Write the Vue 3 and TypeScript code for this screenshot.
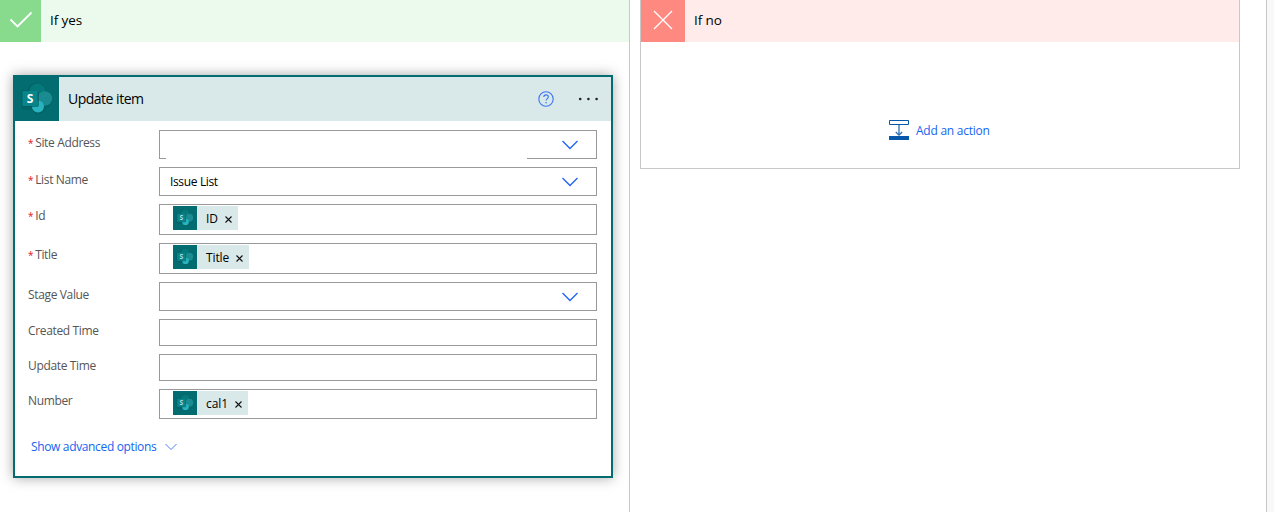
<template>
  <svg class="symbols" width="0" height="0">
    <symbol id="sharepoint" viewBox="0 0 44 44">
      <path
        d="M22 5.5a9 9 0 0 1 9 8.500a9 9 0 0 1 0 17a7.500 7.500 0 0 1-14 2h-7a4 4 0 0 1-4-4v-13a3 3 0 0 1 3-3h4a9 9 0 0 1 9-7.500z"
        fill="#025a5e"
        opacity="0.45"
      />
      <circle cx="22.5" cy="14.500" r="8" fill="#05787b" />
      <circle cx="29.800" cy="21.500" r="7.300" fill="#1a8b91" />
      <circle cx="23" cy="29.500" r="6" fill="#28b3be" />
      <path d="M11 15h13v13a2 2 0 0 1-2 2h-11z" fill="#02595d" opacity="0.65" />
      <rect x="7.500" y="14" width="15" height="15" rx="1" fill="#07858a" />
    </symbol>
  </svg>
  <div class="designer">
    <section class="branch yes">
      <header class="branchHeader">
        <div class="branchIcon">
          <svg width="24" height="18" viewBox="0 0 24 18">
            <path d="M1.500 8.500 8.500 15.500 22.500 1.500" fill="none" stroke="#fff" stroke-width="1.8" />
          </svg>
        </div>
        <span>If yes</span>
      </header>
      <div class="card">
        <div class="cardHeader">
          <svg class="cardIcon" viewBox="0 0 44 44">
            <use href="#sharepoint" />
            <text x="15" y="26" text-anchor="middle" class="spLetter">S</text>
          </svg>
          <span class="cardTitle">Update item</span>
          <svg class="help" width="16" height="16" viewBox="0 0 16 16">
            <circle cx="8" cy="8" r="7.2" fill="none" stroke="#3b74f5" stroke-width="1.1" />
            <path
              d="M5.8 6.1c0-1.4 1-2.2 2.3-2.2s2.2.8 2.2 2c0 1.6-2.2 1.800-2.2 3.700"
              fill="none"
              stroke="#3b74f5"
              stroke-width="1.1"
            />
            <rect x="7.4" y="11" width="1.3" height="1.3" fill="#3b74f5" />
          </svg>
          <svg class="dots" width="21" height="4" viewBox="0 0 21 4">
            <circle cx="2.2" cy="2" r="1.3" />
            <circle cx="10.4" cy="2" r="1.3" />
            <circle cx="18.6" cy="2" r="1.3" />
          </svg>
        </div>
        <div class="fields">
          <div v-for="field in fields" :key="field.label" class="field">
            <label :class="field.kind + 'Label'"><i v-if="field.required">*</i>{{ field.label }}</label>
            <div class="box" :class="[field.kind, { cleared: field.cleared }]">
              <span v-if="field.value" class="value">{{ field.value }}</span>
              <div v-if="field.token" class="token">
                <svg class="tokenIcon" viewBox="0 0 44 44">
                  <use href="#sharepoint" />
                  <text x="15" y="26" text-anchor="middle" class="spLetter faded">S</text>
                </svg>
                <span>{{ field.token }}</span>
                <svg class="remove" width="7" height="7" viewBox="0 0 7 7">
                  <path d="M.5.5l6 6M6.5.5l-6 6" stroke="#111" stroke-width="1.1" />
                </svg>
              </div>
              <svg v-if="field.kind === 'select'" class="chevron" width="16" height="10" viewBox="0 0 16 10">
                <path d="M.5 1 8 8.500 15.500 1" fill="none" stroke="#2266f5" stroke-width="1.4" />
              </svg>
            </div>
          </div>
        </div>
        <a class="advanced">
          <span>Show advanced options</span>
          <svg width="12" height="8" viewBox="0 0 12 8">
            <path d="M.5 1 6 6.500 11.500 1" fill="none" stroke="#4a7ef5" stroke-width="1" />
          </svg>
        </a>
      </div>
    </section>
    <section class="branch no">
      <header class="branchHeader">
        <div class="branchIcon">
          <svg width="20" height="20" viewBox="0 0 20 20">
            <path d="M1 1l18 18M19 1L1 19" stroke="#fff" stroke-width="1.3" />
          </svg>
        </div>
        <span>If no</span>
      </header>
      <a class="addAction">
        <svg width="20" height="20" viewBox="0 0 20 20">
          <path d="M.5.5h19v4H.5z" fill="#fff" stroke="#0757ab" />
          <path d="M10 5v10M6.800 12 10 15.200 13.200 12" fill="none" stroke="#2f6fb5" stroke-width="1.3" />
          <path d="M0 16h20v4H0z" fill="#0757ab" />
        </svg>
        <span>Add an action</span>
      </a>
    </section>
    <div class="rail"></div>
  </div>
</template>

<script setup lang="ts">
interface Field {
  label: string;
  kind: 'select' | 'tokens' | 'number' | 'text';
  required?: boolean;
  value?: string;
  token?: string;
  cleared?: boolean;
}

const fields: Field[] = [
  { label: 'Site Address', kind: 'select', required: true, cleared: true },
  { label: 'List Name', kind: 'select', required: true, value: 'Issue List' },
  { label: 'Id', kind: 'tokens', required: true, token: 'ID' },
  { label: 'Title', kind: 'tokens', required: true, token: 'Title' },
  { label: 'Stage Value', kind: 'select' },
  { label: 'Created Time', kind: 'text' },
  { label: 'Update Time', kind: 'text' },
  { label: 'Number', kind: 'number', token: 'cal1' }
];
</script>

<style>
body {
  overflow: hidden;
  background: #fff;
}
</style>

<style scoped>
.symbols {
  position: absolute;
}
.spLetter {
  font: 700 12px 'Open Sans', sans-serif;
  letter-spacing: 0;
  fill: #fff;
}
.faded {
  fill: #b5dadb;
}
.designer {
  display: flex;
  height: 512px;
  font-family: 'Segoe UI', 'Open Sans', 'Noto Sans', sans-serif;
  font-size: 12px;
  letter-spacing: -0.35px;
  color: #000;
}
.designer svg {
  display: block;
  flex: none;
}
.branch {
  box-sizing: border-box;
  flex: none;
}
.yes {
  width: 630px;
  border-right: 1px solid #c8c8c8;
}
.no {
  width: 600px;
  height: 169px;
  margin-left: 10px;
  border: 1px solid #c8c8c8;
  border-top: none;
}
.branchHeader {
  display: flex;
  align-items: center;
  height: 42px;
  font-size: 13.5px;
}
.branchHeader span {
  margin: -2px 0 0 9px;
  letter-spacing: -0.1px;
}
.branchIcon {
  display: flex;
  align-items: center;
  justify-content: center;
  height: 42px;
}
.yes .branchHeader {
  background: #ebfaed;
}
.yes .branchIcon {
  width: 41px;
  background: #88da8d;
}
.no .branchHeader {
  background: #ffebe9;
}
.no .branchIcon {
  width: 44px;
  background: #fe8981;
}
.branchIcon svg {
  margin-top: -3px;
}
.card {
  box-sizing: border-box;
  width: 600px;
  height: 403px;
  margin: 33px 0 0 13px;
  border: 2px solid #036c70;
  background: #fff;
  box-shadow: 0 0 12px rgba(0, 0, 0, 0.35);
}
.cardHeader {
  display: flex;
  align-items: center;
  height: 44px;
  background: #d9e8e8;
}
.cardIcon {
  width: 44px;
  height: 44px;
  background: #036c70;
}
.cardTitle {
  flex: 1;
  margin: -1px 0 0 9px;
  font-size: 14px;
  letter-spacing: -0.5px;
}
.help {
  margin: -1px 24px 0 0;
}
.dots {
  margin-right: 12px;
  fill: #222;
}
.fields {
  display: flex;
  flex-direction: column;
  gap: 8px;
  padding: 9px 14px 0 12px;
}
.field {
  display: flex;
}
label {
  box-sizing: border-box;
  width: 132px;
  height: 26px;
  padding-left: 1px;
  line-height: 25px;
  color: #555;
}
.textLabel,
.numberLabel {
  line-height: 23px;
}
.tokensLabel {
  line-height: 24px;
}
label i {
  margin-right: 2px;
  font-style: normal;
  font-size: 10px;
  color: #e81123;
}
.box {
  position: relative;
  box-sizing: border-box;
  display: flex;
  width: 438px;
  height: 27px;
  border: 1px solid #999;
}
.select {
  height: 29px;
  align-items: center;
}
.tokens {
  height: 31px;
}
.number {
  height: 30px;
}
.cleared::after {
  content: '';
  position: absolute;
  left: 6px;
  bottom: -1px;
  width: 361px;
  height: 1px;
  background: #fff;
}
.value {
  margin-left: 10px;
}
.chevron {
  margin: 1px 18px 0 auto;
}
.token {
  display: flex;
  align-items: center;
  height: 24px;
  margin: 1px 0 0 13px;
  padding-right: 6px;
  background: #d9e8e8;
}
.tokenIcon {
  width: 24px;
  height: 24px;
  background: #036c70;
}
.token span {
  margin: 0 7px 0 9px;
  letter-spacing: -0.1px;
}
.remove {
  margin-top: 2px;
}
.advanced {
  display: flex;
  align-items: center;
  gap: 9px;
  margin: 19px 0 0 16px;
  color: #1664f0;
}
.addAction {
  display: flex;
  align-items: center;
  gap: 7px;
  margin: 78px 0 0 248px;
  letter-spacing: -0.25px;
  color: #1664f0;
}
.rail {
  flex: 1;
  margin-left: 26px;
  border-left: 1px solid #c8c8c8;
  background: #f8f8f8;
}
</style>
